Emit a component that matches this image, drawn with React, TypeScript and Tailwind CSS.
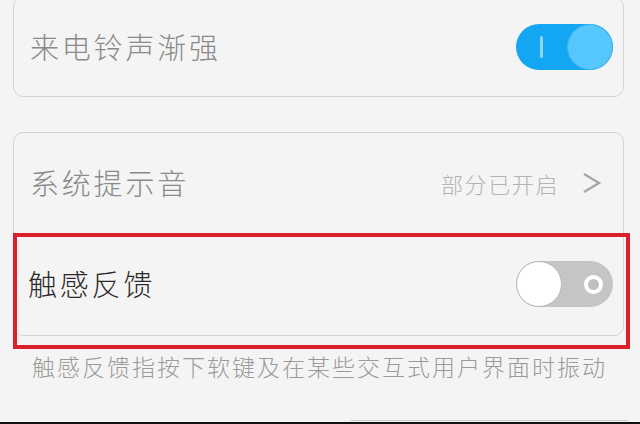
import React from "react";

const FONT = { fontFamily: '"Noto Sans CJK SC", "Noto Sans", sans-serif' };

function ToggleOn() {
  return (
    <div className="relative flex h-[46px] w-[97px] items-center rounded-full bg-[#12a6f3]">
      <div className="ml-[24px] h-[22px] w-[3px] rounded-full bg-[#8fd5fb]" />
      <div className="ml-auto h-[46px] w-[46px] rounded-full border border-[#3fb3ee] bg-[#56c7fc]" />
    </div>
  );
}

function ToggleOff() {
  return (
    <div className="flex h-[46px] w-[97px] items-center rounded-full bg-[#c5c5c5]">
      <div className="h-[46px] w-[46px] rounded-full border border-[#b8b8b8] bg-white" />
      <div className="ml-[22px] h-[19px] w-[19px] rounded-full border-[4px] border-white bg-[#c0c0c0]" />
    </div>
  );
}

export default function App() {
  return (
    <div
      className="relative flex h-[424px] w-[640px] flex-col overflow-hidden bg-[#f4f4f4] font-extralight"
      style={FONT}
    >
      {/* Card 1 */}
      <div className="ml-[13px] mr-[16px] mt-[-3px] flex h-[100px] items-center justify-between rounded-[10px] border border-[#d4d4d4] pl-[16px] pr-[10px]">
        <span className="text-[29px] tracking-[2.8px] text-[#8a8a8a]">来电铃声渐强</span>
        <ToggleOn />
      </div>

      {/* Card 2 */}
      <div className="ml-[13px] mr-[16px] mt-[35px] flex flex-col rounded-[10px] border border-[#d4d4d4]">
        <div className="flex h-[100px] items-center justify-between pl-[16px] pr-[21px]">
          <span className="text-[29px] tracking-[2.8px] text-[#8a8a8a]">系统提示音</span>
          <div className="flex items-center">
            <span className="text-[22px] tracking-[1.6px] text-[#b3b3b3]">部分已开启</span>
            <svg width="20" height="22" viewBox="0 0 20 22" className="ml-[23px]">
              <polyline
                points="2,2 17,11 2,20"
                fill="none"
                stroke="#a6a6a6"
                strokeWidth="2.4"
                strokeLinejoin="miter"
              />
            </svg>
          </div>
        </div>
        <div className="flex h-[102px] items-center justify-between pl-[14px] pr-[10px]">
          <span className="text-[29px] tracking-[2.8px] text-[#2b2b2b]">触感反馈</span>
          <ToggleOff />
        </div>
      </div>

      {/* Caption */}
      <div className="mt-[16px] pl-[32px] text-[23px] leading-[28px] tracking-[2px] text-[#9a9a9a]">
        触感反馈指按下软键及在某些交互式用户界面时振动
      </div>

      <div className="flex-1" />
      <div className="ml-[351px] mr-[12px] h-px bg-[#c8c8c8]" />
      <div className="mt-[1px] h-[2px] bg-[#111]" />

      {/* Red highlight box */}
      <div className="pointer-events-none absolute left-[13px] top-[233px] h-[116px] w-[617px] border-[4px] border-[#d9202b]" />
    </div>
  );
}
